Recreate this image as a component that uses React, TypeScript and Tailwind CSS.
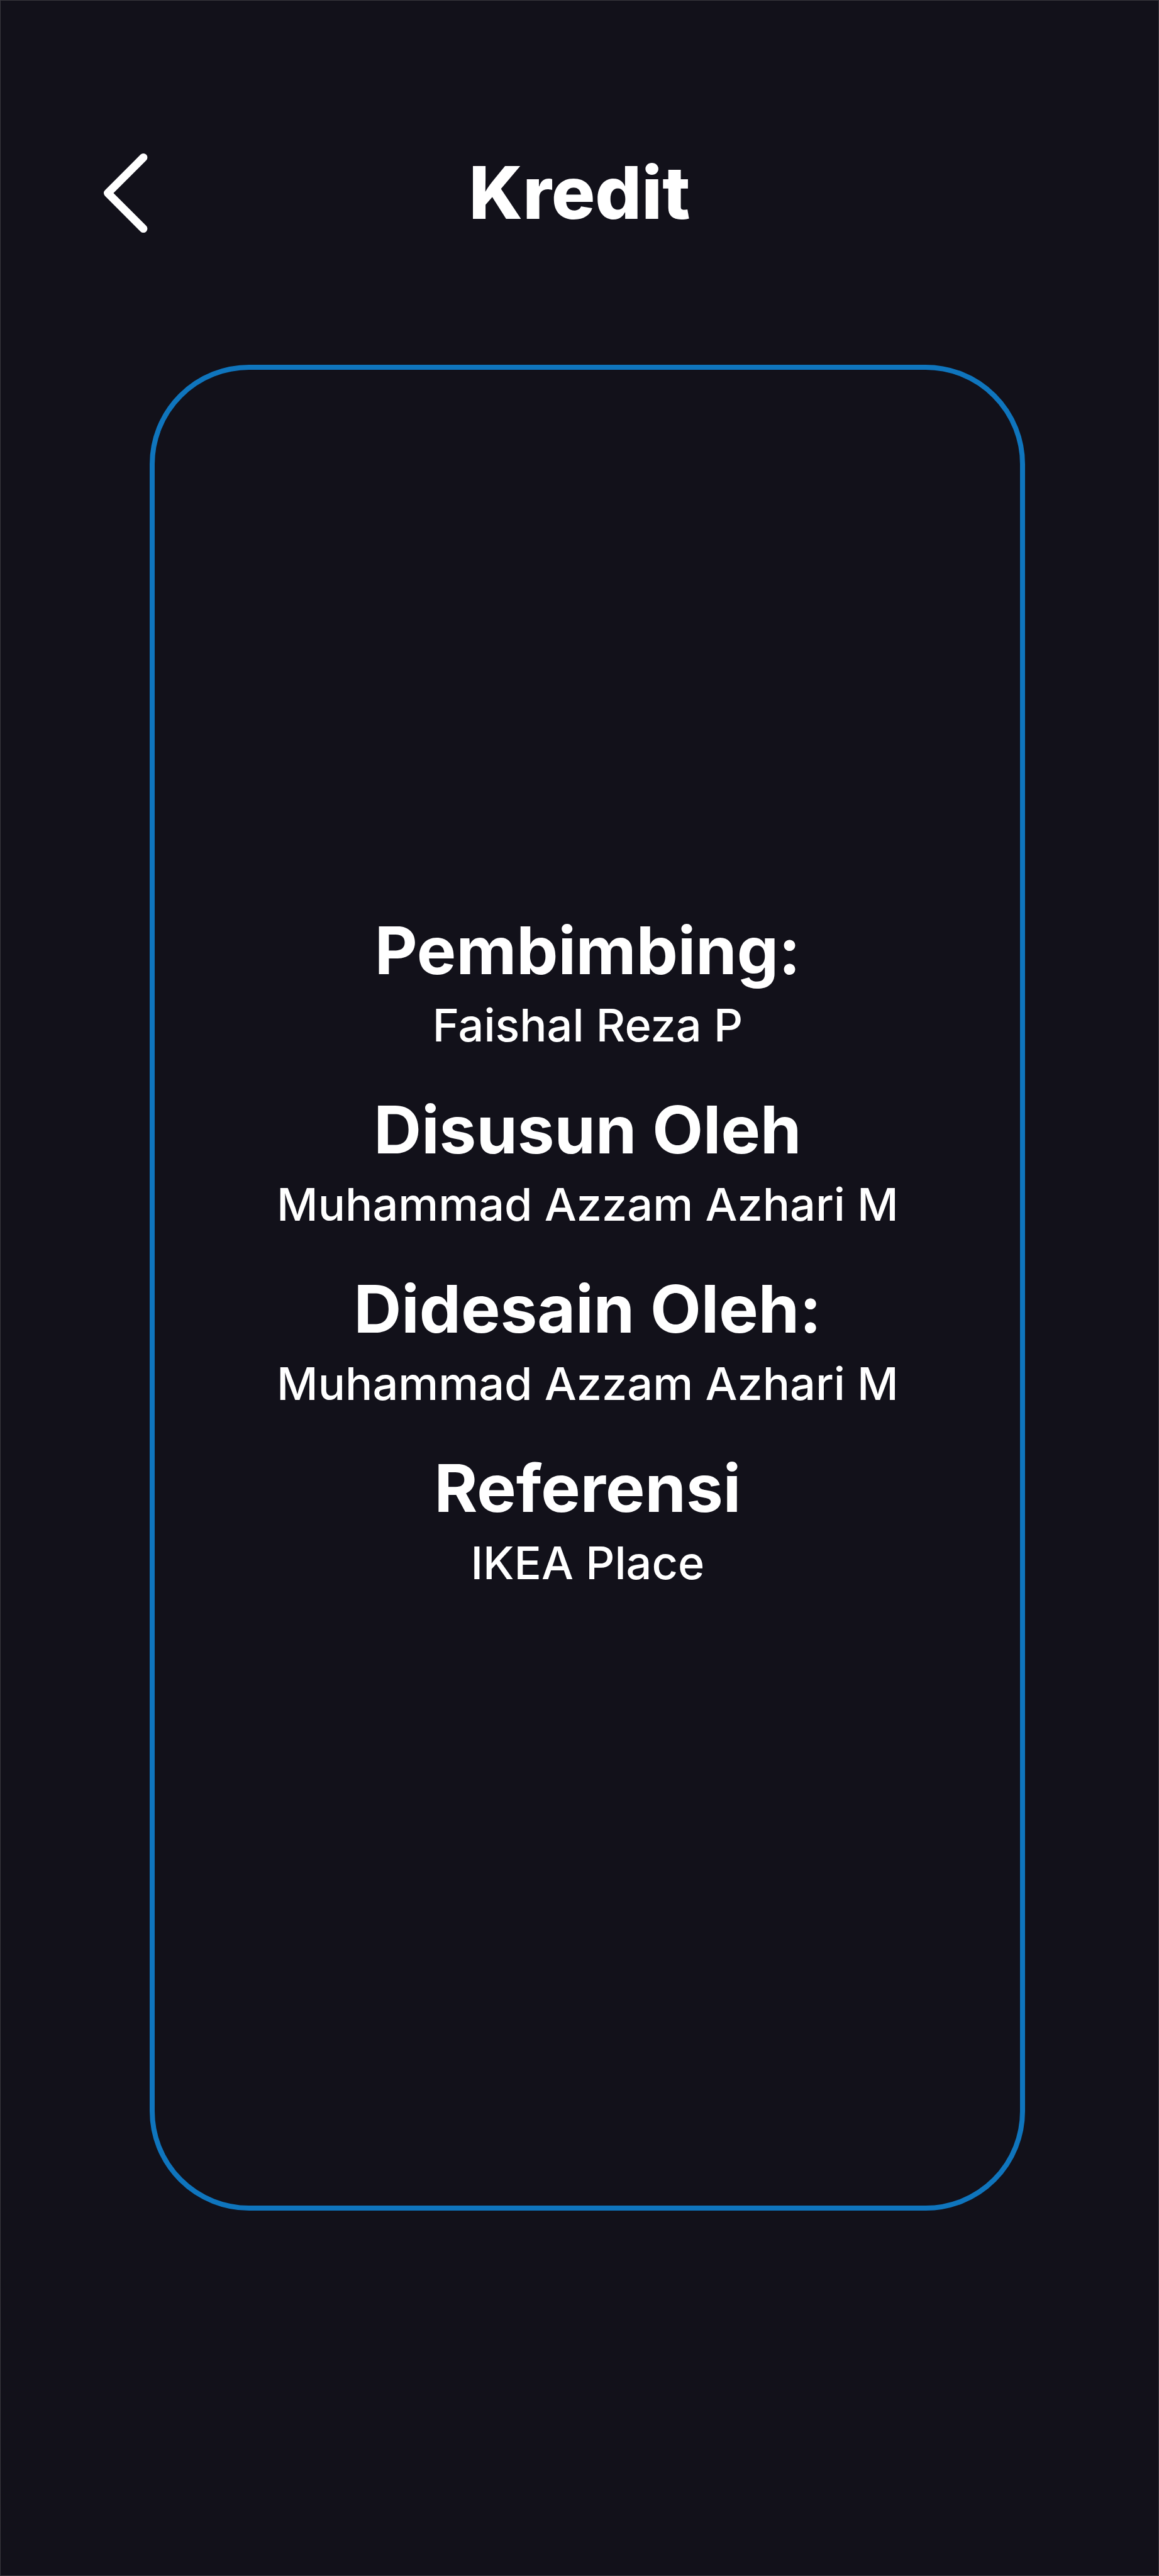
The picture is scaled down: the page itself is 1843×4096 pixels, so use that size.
const credits = [
  { title: "Pembimbing:", name: "Faishal Reza P" },
  { title: "Disusun Oleh", name: "Muhammad Azzam Azhari M" },
  { title: "Didesain Oleh:", name: "Muhammad Azzam Azhari M" },
  { title: "Referensi", name: "IKEA Place" },
];

function BackButton() {
  return (
    <button type="button" aria-label="Kembali" className="justify-self-start">
      <svg
        width="70"
        height="126"
        viewBox="0 0 70 126"
        fill="none"
        stroke="currentColor"
        strokeWidth="12.8"
        strokeLinecap="round"
        strokeLinejoin="round"
        aria-hidden="true"
      >
        <path d="M63 6.4 6.4 63 63 119.6" />
      </svg>
    </button>
  );
}

export default function App() {
  return (
    <div className="flex min-h-screen flex-col border border-[#38373e] bg-[#12111a] pb-[580px] font-['Inter',sans-serif] text-white">
      <header className="mb-[210px] grid grid-cols-[1fr_auto_1fr] items-start px-[8.9%] pt-[243px]">
        <BackButton />
        <h1 className="text-[116px] leading-[124px] font-extrabold">Kredit</h1>
      </header>
      <main className="mr-[11.5%] ml-[12.9%] flex flex-1 flex-col items-center justify-center gap-[47px] rounded-[158px] border-8 border-[#0f75bd] pb-[104px] text-center">
        {credits.map((credit) => (
          <section key={credit.title}>
            <h2 className="text-[105px] leading-[124px] font-bold">{credit.title}</h2>
            <p className="text-[72px] leading-[114px] font-medium">{credit.name}</p>
          </section>
        ))}
      </main>
    </div>
  );
}
